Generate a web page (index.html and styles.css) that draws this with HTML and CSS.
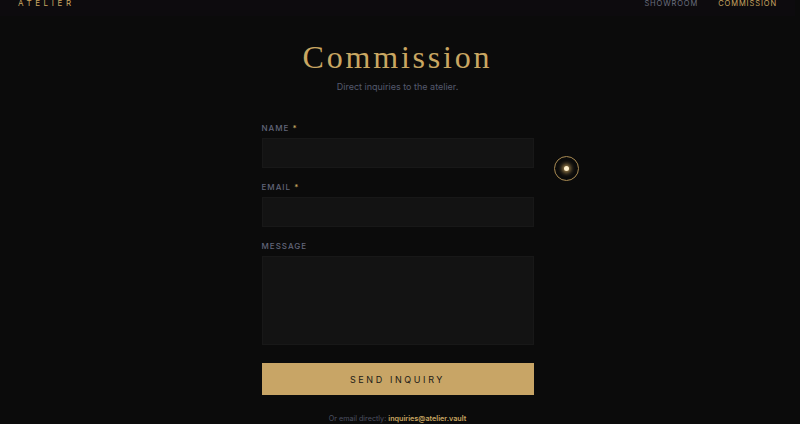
FILE: index.html
```
<!DOCTYPE html>
<html lang="en">

<head>
  <meta charset="UTF-8">
  <meta name="viewport" content="width=device-width, initial-scale=1.0">
  <title>Commission — Atelier</title>
  <link rel="stylesheet" href="styles.css">
</head>

<body>
  <header class="site-header">
    <a class="brand" href="#">ATELIER</a>
    <nav class="nav">
      <a href="#">SHOWROOM</a>
      <a class="active" href="#">COMMISSION</a>
    </nav>
  </header>

  <main class="commission">
    <h1 class="title">Commission</h1>
    <p class="lead">Direct inquiries to the atelier.</p>

    <form class="inquiry-form">
      <div class="field">
        <label for="name">NAME <span class="req">*</span></label>
        <input type="text" id="name">
      </div>
      <div class="field">
        <label for="email">EMAIL <span class="req">*</span></label>
        <input type="email" id="email">
      </div>
      <div class="field">
        <label for="message">MESSAGE</label>
        <textarea id="message"></textarea>
      </div>
      <button type="button" class="send-btn">SEND INQUIRY</button>
    </form>

    <p class="direct">Or email directly: <a href="#">inquiries@atelier.vault</a></p>
  </main>

  <!-- custom cursor -->
  <div class="cursor"><span></span></div>
</body>

</html>
```

FILE: styles.css
```
* {
  box-sizing: border-box;
  margin: 0;
  padding: 0;
}

body {
  background: #0b0b0b;
  font-family: Inter, "Liberation Sans", sans-serif;
  color: #6a6e7e;
  height: 424px;
  overflow: hidden;
  padding-right: 5px;
}

a {
  text-decoration: none;
}

.site-header {
  display: flex;
  justify-content: space-between;
  align-items: center;
  margin-top: -10px;
  padding: 8px 18px 8px 18px;
  background: #0d0b0e;
}

.brand {
  color: #c9a762;
  font-size: 8px;
  letter-spacing: 3.6px;
}

.nav {
  display: flex;
  gap: 20px;
}

.nav a {
  color: #6b6f7f;
  font-size: 7.5px;
  letter-spacing: 0.9px;
}

.nav a.active {
  color: #c9a762;
}

.commission {
  width: 272px;
  margin: 21px auto 0;
  text-align: center;
}

.title {
  font-family: "Liberation Serif", serif;
  font-weight: normal;
  font-size: 32px;
  letter-spacing: 2.8px;
  color: #c9a762;
  line-height: 40px;
}

.lead {
  font-size: 9px;
  color: #555a6e;
  margin-top: 4px;
}

.inquiry-form {
  margin-top: 31px;
  text-align: left;
}

.field {
  margin-bottom: 14px;
}

.field label {
  display: block;
  font-size: 8px;
  letter-spacing: 1px;
  color: #62667a;
  font-weight: 500;
  margin-bottom: 5px;
}

.req {
  color: #c9a762;
}

.field input,
.field textarea {
  display: block;
  width: 100%;
  height: 30px;
  background: #131313;
  border: 1px solid #181818;
  outline: none;
  resize: none;
}

.field textarea {
  height: 89px;
}

.field:last-of-type {
  margin-bottom: 0;
}

.send-btn {
  display: block;
  width: 100%;
  height: 32px;
  margin-top: 18px;
  background: #c8a566;
  border: none;
  color: #1c1a16;
  font-family: Inter, "Liberation Sans", sans-serif;
  font-size: 9px;
  letter-spacing: 2.6px;
}

.direct {
  margin-top: 19px;
  font-size: 7.2px;
  color: #4c5062;
}

.direct a {
  color: #c9a762;
  font-weight: 600;
}

.cursor {
  position: absolute;
  left: 554px;
  top: 156px;
  width: 25px;
  height: 25px;
  border: 1.5px solid #a88a52;
  border-radius: 50%;
  display: flex;
  align-items: center;
  justify-content: center;
}

.cursor span {
  width: 5px;
  height: 5px;
  border-radius: 50%;
  background: #fff2d0;
  box-shadow: 0 0 4px 2px rgba(232, 190, 110, 0.7);
}
```
